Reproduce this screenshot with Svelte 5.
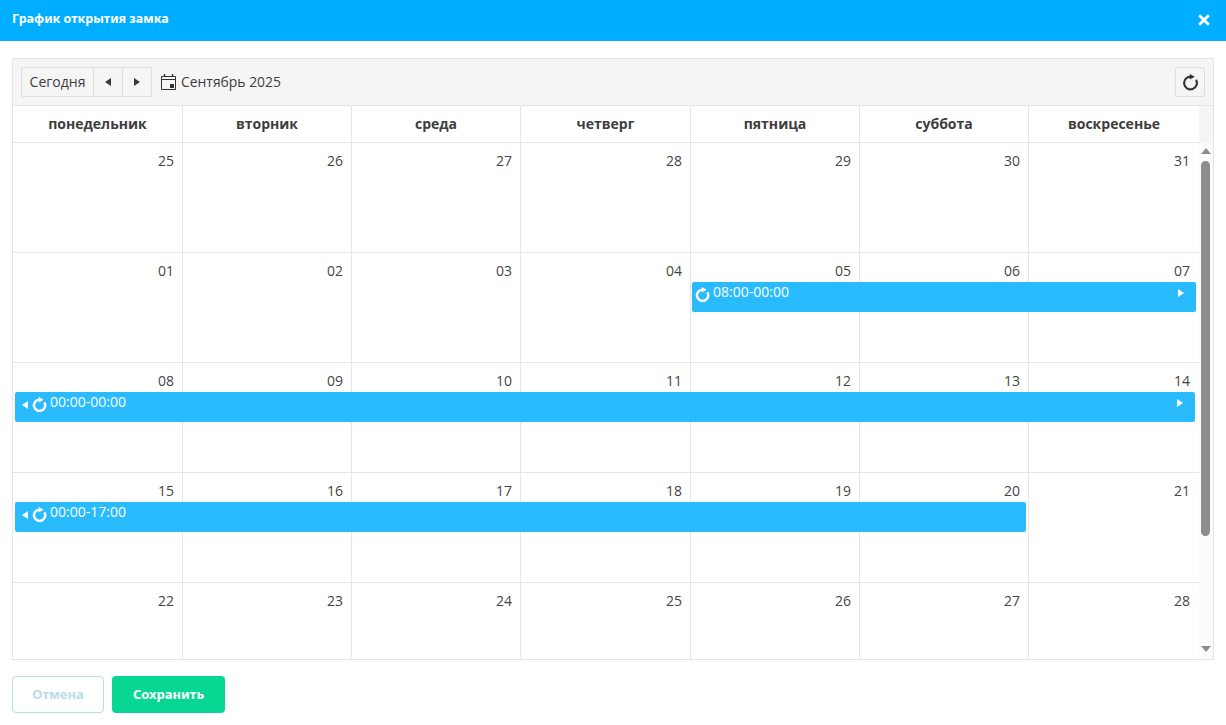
<script>
  const days = ['понедельник', 'вторник', 'среда', 'четверг', 'пятница', 'суббота', 'воскресенье'];
  const weeks = [
    { dates: ['25', '26', '27', '28', '29', '30', '31'], event: null },
    { dates: ['01', '02', '03', '04', '05', '06', '07'], event: { start: 5, end: 8, time: '08:00-00:00', prev: false, next: true, left: 1, right: 3 } },
    { dates: ['08', '09', '10', '11', '12', '13', '14'], event: { start: 1, end: 8, time: '00:00-00:00', prev: true, next: true, left: 2, right: 4 } },
    { dates: ['15', '16', '17', '18', '19', '20', '21'], event: { start: 1, end: 7, time: '00:00-17:00', prev: true, next: false, left: 2, right: 3 } },
    { dates: ['22', '23', '24', '25', '26', '27', '28'], event: null }
  ];
</script>

<div class="modal">
  <header class="title">
    <span>График открытия замка</span>
    <svg class="close" viewBox="0 0 12 12" width="12" height="12" aria-hidden="true">
      <path d="M1.2 1.2 10.8 10.8M10.8 1.2 1.2 10.8" stroke="#fff" stroke-width="2.8" fill="none" />
    </svg>
  </header>

  <main class="content">
    <section class="calendar">
      <div class="toolbar">
        <div class="group">
          <button class="btn today">Сегодня</button>
          <button class="btn arrow" aria-label="prev"><svg viewBox="0 0 6 8" width="6" height="8"><path d="M6 0v8L0 4z" fill="#3a3a3a" /></svg></button>
          <button class="btn arrow" aria-label="next"><svg viewBox="0 0 6 8" width="6" height="8"><path d="M0 0v8l6-4z" fill="#3a3a3a" /></svg></button>
        </div>
        <div class="month">
          <svg viewBox="0 0 15 16" width="15" height="16" aria-hidden="true">
            <path d="M.5 2.5h14v13H.5zM.5 5.5h14" fill="none" stroke="#333" stroke-width="1" />
            <path d="M3.5 0v3M11.5 0v3" stroke="#333" stroke-width="1.4" />
            <rect x="9" y="10" width="4" height="4" fill="#333" />
          </svg>
          <span>Сентябрь 2025</span>
        </div>
        <button class="btn refresh" aria-label="refresh">
          <svg viewBox="0 0 16 16" width="17" height="17">
            <path d="M13.2 5.5A6 6 0 1 1 8 2.5" fill="none" stroke="#333" stroke-width="2" />
            <path d="M7.4 0 12 2.6 7.4 5.2z" fill="#333" />
          </svg>
        </button>
      </div>

      <div class="head-row">
        <div class="head-cells">
          {#each days as d}
            <div class="head-cell">{d}</div>
          {/each}
        </div>
        <div class="head-gap"></div>
      </div>

      <div class="body">
        <div class="weeks">
          {#each weeks as w}
            <div class="week">
              {#each w.dates as date, i}
                <div class="day" style="grid-column: {i + 1}">{date}</div>
              {/each}
              {#if w.event}
                <div class="event" style="grid-column: {w.event.start} / {w.event.end}; margin-left: {w.event.left}px; margin-right: {w.event.right}px">
                  {#if w.event.prev}
                    <svg class="tri" viewBox="0 0 6 8" width="6" height="8"><path d="M6 0v8L0 4z" fill="#fff" /></svg>
                  {/if}
                  <svg class="rep" viewBox="0 0 16 16" width="15" height="15">
                    <path d="M13.2 5.7A6 6 0 1 1 8 2.8" fill="none" stroke="#fff" stroke-width="2.6" />
                    <path d="M7.2 0 12.4 2.9 7.2 5.8z" fill="#fff" />
                  </svg>
                  <span class="time">{w.event.time}</span>
                  {#if w.event.next}
                    <svg class="tri next" viewBox="0 0 6 8" width="6" height="8"><path d="M0 0v8l6-4z" fill="#fff" /></svg>
                  {/if}
                </div>
              {/if}
            </div>
          {/each}
        </div>
        <div class="scrollbar">
          <svg viewBox="0 0 10 6" width="10" height="6"><path d="M0 6h10L5 0z" fill="#8d8d8d" /></svg>
          <div class="track"><div class="thumb"></div></div>
          <svg viewBox="0 0 10 6" width="10" height="6"><path d="M0 0h10L5 6z" fill="#8d8d8d" /></svg>
        </div>
      </div>
    </section>

    <footer class="actions">
      <button class="action cancel">Отмена</button>
      <button class="action save">Сохранить</button>
    </footer>
  </main>
</div>

<style>
  :global(body) {
    margin: 0;
    background: #fff;
    font-family: "Open Sans", "Liberation Sans", sans-serif;
    color: #3d3d3d;
  }
  button {
    font-family: inherit;
    margin: 0;
    cursor: pointer;
  }
  .modal {
    width: 1226px;
    height: 725px;
    overflow: hidden;
    display: flex;
    flex-direction: column;
  }
  .title {
    height: 41px;
    flex: none;
    box-sizing: border-box;
    background: #00aeff;
    color: #fff;
    font-family: "Noto Sans", "Open Sans", sans-serif;
    font-size: 12.5px;
    font-weight: 700;
    display: flex;
    align-items: center;
    justify-content: space-between;
    padding: 0 16px 5px 12px;
  }
  .close {
    margin-top: 4px;
  }
  .content {
    padding: 17px 12px 0;
  }
  .calendar {
    box-sizing: border-box;
    width: 1202px;
    height: 602px;
    border: 1px solid #e4e4e4;
    display: flex;
    flex-direction: column;
  }
  .toolbar {
    height: 47px;
    flex: none;
    box-sizing: border-box;
    background: #f5f5f5;
    border-bottom: 1px solid #e6e6e6;
    display: flex;
    align-items: center;
    padding: 0 8px;
  }
  .group {
    display: flex;
  }
  .btn {
    height: 30px;
    box-sizing: border-box;
    background: #f5f5f5;
    border: 1px solid #dedede;
    color: #3d3d3d;
    font-size: 14px;
    padding: 0;
    display: flex;
    align-items: center;
    justify-content: center;
    border-radius: 0;
  }
  .today {
    width: 73px;
    padding-bottom: 2px;
    border-radius: 2px 0 0 2px;
  }
  .arrow {
    width: 30px;
    margin-left: -1px;
  }
  .arrow:last-child {
    border-radius: 0 2px 2px 0;
  }
  .month {
    margin-left: 9px;
    display: flex;
    align-items: center;
    gap: 5px;
    font-size: 13.9px;
    flex: 1;
  }
  .month span {
    margin-top: -1px;
  }
  .refresh {
    width: 30px;
    border-radius: 2px;
  }
  .head-row {
    display: flex;
    height: 37px;
    flex: none;
  }
  .head-gap {
    width: 14px;
    background: #f5f5f5;
  }
  .head-cells,
  .week {
    width: 1186px;
    display: grid;
    grid-template-columns: 170px 169px 169px 170px 169px 169px 170px;
  }
  .head-cells {
    box-sizing: border-box;
    border-bottom: 1px solid #e6e6e6;
  }
  .head-cell {
    box-sizing: border-box;
    border-right: 1px solid #e6e6e6;
    text-align: center;
    font-size: 14px;
    font-weight: 700;
    line-height: 36px;
    min-width: 0;
  }
  .head-cell:last-child {
    border-right: 0;
  }
  .body {
    flex: 1;
    min-height: 0;
    display: flex;
    overflow: hidden;
  }
  .weeks {
    width: 1186px;
    flex: none;
  }
  .week {
    height: 110px;
    box-sizing: border-box;
    border-bottom: 1px solid #e6e6e6;
  }
  .day {
    grid-row: 1;
    box-sizing: border-box;
    border-right: 1px solid #e6e6e6;
    text-align: right;
    font-size: 14px;
    line-height: 19px;
    padding: 8px 8px 0 0;
    min-width: 0;
    color: #454545;
  }
  .day:nth-child(7) {
    border-right: 0;
    padding-right: 9px;
  }
  .event {
    grid-row: 1;
    align-self: start;
    box-sizing: border-box;
    height: 30px;
    margin-top: 29px;
    background: #2abbff;
    border-radius: 2px;
    color: #fff;
    font-size: 14px;
    display: flex;
    align-items: flex-start;
    padding-left: 3px;
  }
  .tri {
    margin: 9px 4px 0 4px;
    flex: none;
  }
  .tri.next {
    margin: 7px 12px 0 auto;
  }
  .rep {
    margin: 5px 3px 0 0;
    flex: none;
  }
  .time {
    line-height: 20px;
  }
  .scrollbar {
    width: 14px;
    flex: none;
    background: #fbfbfb;
    display: flex;
    flex-direction: column;
    align-items: center;
    padding: 5px 0 7px 0;
    box-sizing: border-box;
  }
  .track {
    flex: 1;
    width: 100%;
    padding-top: 7px;
    box-sizing: border-box;
  }
  .thumb {
    width: 9px;
    height: 375px;
    margin-left: 2px;
    background: #8d8d8d;
    border-radius: 5px;
  }
  .actions {
    display: flex;
    gap: 8px;
    margin-top: 16px;
  }
  .action {
    height: 37px;
    box-sizing: border-box;
    border-radius: 4px;
    font-family: "Noto Sans", "Open Sans", sans-serif;
    font-size: 13px;
    font-weight: 700;
    padding: 0 0 1px;
  }
  .cancel {
    width: 92px;
    background: #fff;
    border: 1px solid #b9dcec;
    color: #b9dcec;
  }
  .save {
    width: 113px;
    background: #08d793;
    border: 0;
    color: #fff;
  }
</style>
